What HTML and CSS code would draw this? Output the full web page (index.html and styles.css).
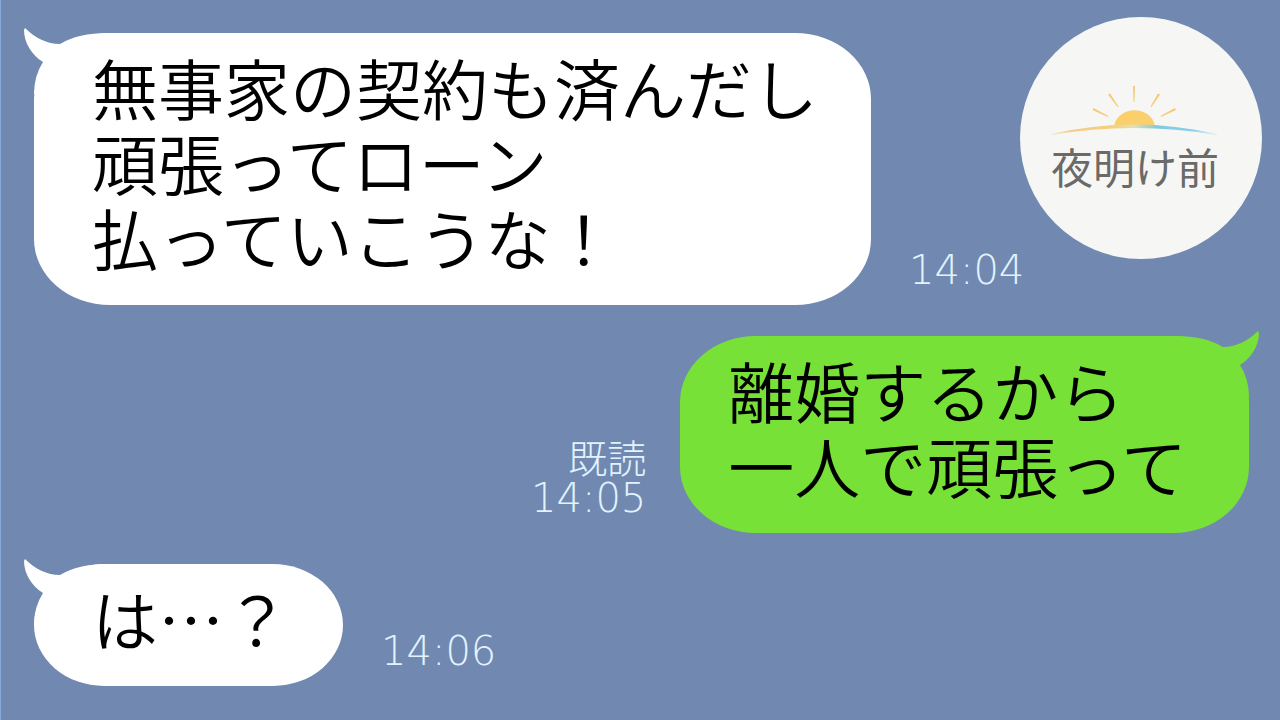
FILE: index.html
```html
<!DOCTYPE html>
<html lang="ja">
<head>
<meta charset="utf-8">
<meta name="viewport" content="width=device-width, initial-scale=1">
<title>夜明け前</title>
<link rel="stylesheet" href="styles.css">
</head>
<body>
<main class="chat">
  <article class="message received">
    <div class="bubble">
      <svg class="tail" viewBox="0 0 90 70" aria-hidden="true"><path d="M1 0C11 10 23 16 36 16Q54 5 84 5V66H10Q10 48 19 34C8 27 0 15 0 2Z"/></svg>
      <p class="text">無事家の契約も済んだし<br>頑張ってローン<br>払っていこうな！</p>
    </div>
    <div class="meta"><time>14:04</time></div>
  </article>
  <article class="message sent">
    <div class="bubble">
      <svg class="tail" viewBox="0 0 90 70" aria-hidden="true"><path d="M1 0C11 10 23 16 36 16Q54 5 84 5V66H10Q10 48 19 34C8 27 0 15 0 2Z"/></svg>
      <p class="text">離婚するから<br>一人で頑張って</p>
    </div>
    <div class="meta"><span class="read">既読</span><time>14:05</time></div>
  </article>
  <article class="message received">
    <div class="bubble">
      <svg class="tail" viewBox="0 0 90 70" aria-hidden="true"><path d="M1 0C11 10 23 16 36 16Q54 5 84 5V66H10Q10 48 19 34C8 27 0 15 0 2Z"/></svg>
      <p class="text">は…？</p>
    </div>
    <div class="meta"><time>14:06</time></div>
  </article>
</main>
<aside class="badge">
  <svg class="sunrise" viewBox="0 0 176 52" aria-hidden="true">
    <defs>
      <linearGradient id="horizon" x1="0" x2="1" y1="0" y2="0">
        <stop offset="0" stop-color="#f8c882" stop-opacity=".3"/>
        <stop offset=".12" stop-color="#f6cb8d"/>
        <stop offset=".35" stop-color="#f5cf7a"/>
        <stop offset=".5" stop-color="#e4dfb0"/>
        <stop offset=".64" stop-color="#7fcbe0"/>
        <stop offset=".85" stop-color="#8fcdea"/>
        <stop offset="1" stop-color="#a8dcf2" stop-opacity=".3"/>
      </linearGradient>
    </defs>
    <path d="M67 41C71 20 104 20 108 41Z" fill="#fbcf6c"/>
    <path d="M4 49Q87 30 170 49V50Q87 36 4 50Z" fill="url(#horizon)"/>
    <g fill="#f5c978">
      <path d="M86 1h2l-.5 16h-1z"/>
      <path d="M61 9.500l2-1 8.500 13-1 .5z"/>
      <path d="M111 8.500l2 1-8.500 12.500-1-.5z"/>
      <path d="M45.500 25l1-2 15 8-.5 1z"/>
      <path d="M128 23l1 2-15 7-.5-1z"/>
    </g>
  </svg>
  <span class="badge-name">夜明け前</span>
</aside>
</body>
</html>
```
FILE: styles.css
```css
* {
  box-sizing: border-box;
}

body {
  margin: 0;
  min-height: 100vh;
  position: relative;
  background: #7189b0;
  border-left: 1px solid #88abdc;
  font-family: "Noto Sans CJK JP", sans-serif;
  color: #000;
}

.chat {
  display: flex;
  flex-direction: column;
  gap: 31px;
  padding: 33px 31px 33px 33px;
}

.message {
  display: flex;
  align-items: flex-end;
  gap: 38px;
}

.sent {
  flex-direction: row-reverse;
  gap: 34px;
}

.bubble {
  position: relative;
  padding: 16px 53px 31px 58px;
  border-radius: 76px / 66px;
  background: #fff;
}

.sent .bubble {
  padding-left: 48px;
  padding-right: 62px;
  background: #78e138;
}

.tail {
  position: absolute;
  top: -5px;
  left: -10px;
  width: 90px;
  height: 70px;
  fill: #fff;
}

.sent .tail {
  left: auto;
  right: -10px;
  fill: #78e138;
  transform: scaleX(-1);
}

.text {
  position: relative;
  margin: 0;
  font-size: 66px;
  font-weight: 350;
  line-height: 75px;
  white-space: nowrap;
}

.meta {
  display: flex;
  flex-direction: column;
  align-items: flex-end;
  padding-bottom: 14px;
  color: #e2f3ff;
  font-size: 39px;
  font-weight: 300;
  line-height: 42px;
}

.meta time {
  font-family: "DejaVu Sans Light", "DejaVu Sans", sans-serif;
  font-size: 40px;
  font-weight: 200;
}

.badge {
  position: absolute;
  top: 17px;
  right: 18px;
  width: 242px;
  height: 242px;
  padding: 68px 12px 0 0;
  display: flex;
  flex-direction: column;
  align-items: center;
  border-radius: 50%;
  background: #f6f7f5;
}

.sunrise {
  width: 176px;
  height: 52px;
}

.badge-name {
  color: #6b6a68;
  font-size: 42px;
  font-weight: 400;
  line-height: 58px;
}
```
